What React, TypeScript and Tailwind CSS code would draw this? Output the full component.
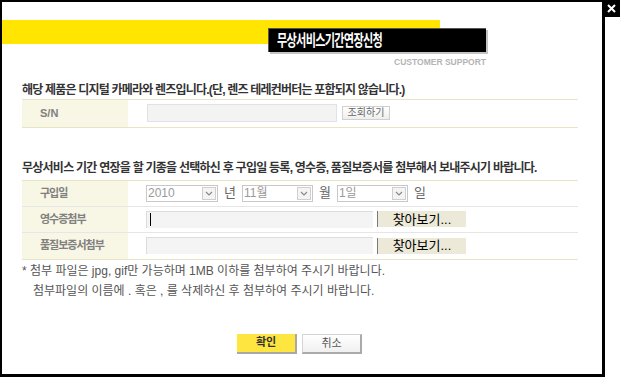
import React from 'react';

const selectBox = (value: string, width: string) => (
  <div className={`flex h-[17px] items-center justify-between border border-[#c8c8c8] bg-white pl-[1px] pr-[1px] ${width}`}>
    <span className="text-[12px] leading-none text-[#9a9a9a]">{value}</span>
    <span className="flex h-[13px] w-[14px] items-center justify-center border border-[#cfcfcf] bg-[#f4f4f4]">
      <svg width="8" height="5" viewBox="0 0 8 5">
        <polyline points="1,1 4,4 7,1" fill="none" stroke="#8a8a8a" strokeWidth="1.2" />
      </svg>
    </span>
  </div>
);

function FileRow({ label, cursor }: { label: string; cursor?: boolean }) {
  return (
    <div className="flex h-[26px] items-stretch border-b border-[#e6e6e6] last:border-b-0">
      <div className="flex w-[106px] items-center bg-[#f8f6e4] pl-[18px] text-[11px] font-bold tracking-[-1px] text-[#808080]">
        {label}
      </div>
      <div className="flex items-center pl-[18px]">
        <div className="flex h-[17px] w-[227px] items-center border-t border-l border-[#dcdcdc] bg-[#f4f4f4] pl-[3px]">
          {cursor && <span className="h-[13px] w-[1px] bg-black" />}
        </div>
        <button className="ml-[4px] flex h-[16px] w-[89px] items-center justify-center border-l border-[#7a7a7a] bg-[#ece9d8] text-[13px] leading-none text-black">
          찾아보기...
        </button>
      </div>
    </div>
  );
}

export default function App() {
  return (
    <div className="relative h-[377px] w-[620px] bg-white font-['Liberation_Sans','Noto_Sans_CJK_KR',sans-serif]">
      <div className="flex h-[377px] w-[605px] flex-col border-t-2 border-l-2 border-r-[3px] border-b-[3px] border-black bg-white">
        {/* header */}
        <div className="mt-[18px] h-[24px] w-[438px] bg-[#ffe500]" />
        <div className="ml-[266px] -mt-[16px] flex h-[24px] w-[218px] items-center border-t border-l border-[#555] bg-black pl-[8px] shadow-[2px_2px_0_#c4c4c4]">
          <span className="inline-block origin-left scale-x-[0.72] whitespace-nowrap text-[15.5px] font-bold tracking-[-1px] text-white">
            무상서비스기간연장신청
          </span>
        </div>
        <div className="mt-[6px] w-[484px] text-right text-[8.5px] font-bold leading-none text-[#b4b4b4]">
          CUSTOMER SUPPORT
        </div>

        {/* section 1 */}
        <div className="mt-[17px] px-[20px]">
          <p className="text-[12px] font-bold leading-none tracking-[-0.8px] text-[#333]">
            해당 제품은 디지털 카메라와 렌즈입니다.(단, 렌즈 테레컨버터는 포함되지 않습니다.)
          </p>
          <div className="mt-[3px] flex h-[29px] w-[556px] items-stretch border-y border-[#e8e4c4]">
            <div className="flex w-[106px] items-center bg-[#f8f6e4] pl-[18px] text-[11px] font-bold text-[#808080]">
              S/N
            </div>
            <div className="flex items-center pl-[19px]">
              <div className="h-[18px] w-[190px] border border-[#e2e2e2] bg-[#f3f3f3]" />
              <button className="ml-[5px] flex h-[14px] w-[48px] items-center justify-center border border-[#d0d0d0] bg-gradient-to-b from-white to-[#eeeeee] text-[10px] leading-none text-[#666]">
                조회하기
              </button>
            </div>
          </div>
        </div>

        {/* section 2 */}
        <div className="mt-[34px] px-[20px]">
          <p className="text-[12px] font-bold leading-none tracking-[-0.75px] text-[#333]">
            무상서비스 기간 연장을 할 기종을 선택하신 후 구입일 등록, 영수증, 품질보증서를 첨부해서 보내주시기 바랍니다.
          </p>
          <div className="mt-[6px] w-[556px] border-y border-[#e8e4c4]">
            <div className="flex h-[26px] items-stretch border-b border-[#e6e6e6]">
              <div className="flex w-[106px] items-center bg-[#f8f6e4] pl-[18px] text-[11px] font-bold tracking-[-1px] text-[#808080]">
                구입일
              </div>
              <div className="flex items-center pl-[18px] text-[13px] text-[#666]">
                {selectBox('2010', 'w-[72px]')}
                <span className="mx-[6px] -mt-[2px] leading-none">년</span>
                {selectBox('11월', 'w-[71px]')}
                <span className="mx-[6px] -mt-[2px] leading-none">월</span>
                {selectBox('1일', 'w-[71px]')}
                <span className="mx-[6px] -mt-[2px] leading-none">일</span>
              </div>
            </div>
            <FileRow label="영수증첨부" cursor />
            <FileRow label="품질보증서첨부" />
          </div>
          <div className="mt-[1px] text-[12px] leading-[20px] text-[#555]">
            <p>* 첨부 파일은 jpg, gif만 가능하며 1MB 이하를 첨부하여 주시기 바랍니다.</p>
            <p className="pl-[11px]">첨부파일의 이름에 . 혹은 , 를 삭제하신 후 첨부하여 주시기 바랍니다.</p>
          </div>
        </div>

        {/* buttons */}
        <div className="mt-[33px] flex justify-center gap-[5px] pr-[5px]">
          <button className="flex h-[20px] w-[60px] items-center justify-center border-r-2 border-b-2 border-[#a8a8a8] bg-[#ffe53f] text-[11px] font-bold text-[#333]">
            확인
          </button>
          <button className="flex h-[20px] w-[60px] items-center justify-center border border-[#d4d4d4] border-r-2 border-b-2 border-r-[#aaa] border-b-[#aaa] bg-gradient-to-b from-white to-[#f0f0f0] text-[11px] text-[#555]">
            취소
          </button>
        </div>
      </div>

      {/* close */}
      <button className="absolute right-0 top-0 flex h-[17px] w-[17px] items-center justify-center bg-black">
        <svg width="9" height="9" viewBox="0 0 9 9">
          <path d="M1 1 L8 8 M8 1 L1 8" stroke="white" strokeWidth="2" />
        </svg>
      </button>
    </div>
  );
}
